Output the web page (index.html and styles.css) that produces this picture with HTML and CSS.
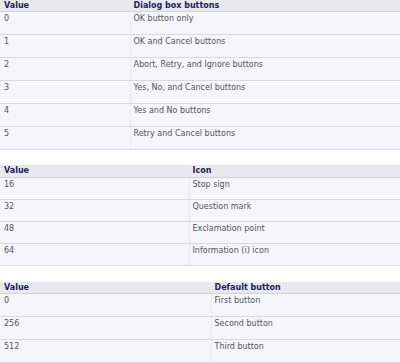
FILE: index.html
```html
<!DOCTYPE html>
<html>
<head>
<meta charset="utf-8">
<link rel="stylesheet" href="styles.css">
</head>
<body>
<table class="tbl tbl-1">
  <colgroup><col class="c1"><col></colgroup>
  <thead><tr><th>Value</th><th>Dialog box buttons</th></tr></thead>
  <tbody>
    <tr><td>0</td><td>OK button only</td></tr>
    <tr><td>1</td><td>OK and Cancel buttons</td></tr>
    <tr><td>2</td><td>Abort, Retry, and Ignore buttons</td></tr>
    <tr><td>3</td><td>Yes, No, and Cancel buttons</td></tr>
    <tr><td>4</td><td>Yes and No buttons</td></tr>
    <tr><td>5</td><td>Retry and Cancel buttons</td></tr>
  </tbody>
</table>
<table class="tbl tbl-2">
  <colgroup><col class="c1"><col></colgroup>
  <thead><tr><th>Value</th><th>Icon</th></tr></thead>
  <tbody>
    <tr><td>16</td><td>Stop sign</td></tr>
    <tr><td>32</td><td>Question mark</td></tr>
    <tr><td>48</td><td>Exclamation point</td></tr>
    <tr><td>64</td><td>Information (i) icon</td></tr>
  </tbody>
</table>
<table class="tbl tbl-3">
  <colgroup><col class="c1"><col></colgroup>
  <thead><tr><th>Value</th><th>Default button</th></tr></thead>
  <tbody>
    <tr><td>0</td><td>First button</td></tr>
    <tr><td>256</td><td>Second button</td></tr>
    <tr><td>512</td><td>Third button</td></tr>
  </tbody>
</table>
</body>
</html>
```
FILE: styles.css
```css
html, body {
  margin: 0;
  padding: 0;
  background: #ffffff;
}
body {
  width: 400px;
  font-family: "DejaVu Sans", Verdana, sans-serif;
  font-size: 8px;
  line-height: 10px;
  color: #555555;
}
.tbl {
  width: 400px;
  border-collapse: collapse;
  table-layout: fixed;
  border-spacing: 0;
}
.tbl th {
  background: #e8e8ee;
  color: #1e1e5a;
  font-weight: bold;
  text-align: left;
  padding: 1px 0 0 3px;
  height: 9px;
  border-bottom: 1px solid #d2d2dc;
  vertical-align: top;
}
.tbl td {
  background: #f6f6fa;
  padding: 2px 0 0 3px;
  height: 20px;
  vertical-align: top;
  border-bottom: 1px solid #d8d8e0;
}
.tbl th:first-child,
.tbl td:first-child {
  padding-left: 4px;
}
.tbl th + th,
.tbl td + td {
  border-left: 1px solid #eaeaf0;
}
.tbl-1 .c1 { width: 130px; }
.tbl-2 { margin-top: 15px; }
.tbl-2 .c1 { width: 189px; }
.tbl-2 th { height: 11px; }
.tbl-2 td { height: 19px; }
.tbl-3 { margin-top: 16px; }
.tbl-3 .c1 { width: 211px; }
.tbl-3 th + th, .tbl-3 td + td { padding-left: 3px; }
```
